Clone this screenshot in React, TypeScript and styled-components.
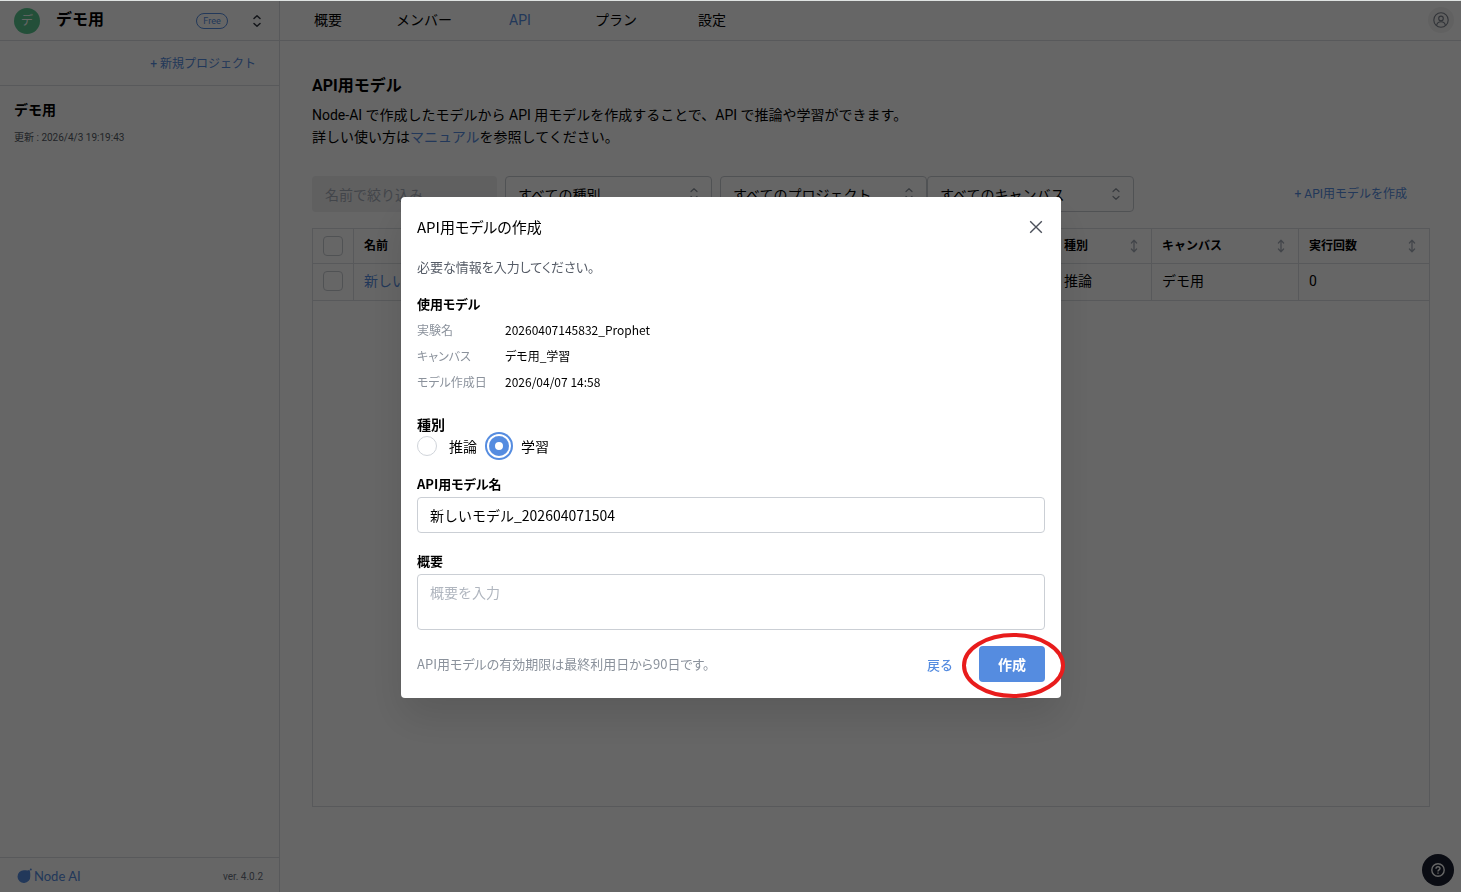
import React, { useState } from 'react';
import styled, { createGlobalStyle } from 'styled-components';

const blue = '#558ce0';
const line = '#dcdfe3';
const pageFont = "Roboto, 'Noto Sans CJK JP', sans-serif";
const dialogFont = "'Noto Sans CJK JP', 'Noto Sans', sans-serif";

const GlobalStyle = createGlobalStyle`
  *, *::before, *::after { box-sizing: border-box; }
  body { margin: 0; font-family: ${pageFont}; font-size: 14px; color: #000; background: #fff; }
  button, input, select, textarea { font: inherit; color: inherit; margin: 0; }
  button { border: 0; padding: 0; background: none; cursor: pointer; }
  a { color: ${blue}; text-decoration: none; }
  h1, h2, h3, p, dl, dd, dt, fieldset, legend { margin: 0; padding: 0; }
`;

/* ---------- Shell ---------- */
const Shell = styled.div`
  display: grid;
  grid-template-columns: 280px 1fr;
  min-height: 100vh;
`;

const Sidebar = styled.aside`
  display: flex;
  flex-direction: column;
  border-right: 1px solid ${line};
`;

const TeamBar = styled.div`
  display: flex;
  align-items: center;
  height: 41px;
  padding: 2px 14px 0;
  border-bottom: 1px solid ${line};
`;

const TeamAvatar = styled.span`
  display: grid;
  place-items: center;
  width: 26px;
  height: 26px;
  border-radius: 50%;
  background: #58c590;
  color: #fff;
  font-size: 12px;
  line-height: 24px;
`;

const TeamName = styled.strong`
  flex: 1;
  margin-left: 16px;
  font-size: 16px;
  line-height: 24px;
  padding-bottom: 2px;
`;

const PlanBadge = styled.span`
  width: 32px;
  height: 16px;
  border: 1px solid ${blue};
  border-radius: 8px;
  color: ${blue};
  font-size: 9px;
  line-height: 14px;
  text-align: center;
`;

const TeamSwitch = styled.button`
  display: grid;
  place-items: center;
  width: 16px;
  height: 24px;
  margin-left: 21px;
`;

const NewProject = styled.div`
  display: flex;
  align-items: center;
  justify-content: flex-end;
  height: 45px;
  padding: 2px 23px 0;
  border-bottom: 1px solid ${line};
`;

const TextButton = styled.button`
  color: ${blue};
  font-size: 12px;
  line-height: 20px;
`;

const Project = styled.div`
  flex: 1;
  padding: 14px;
`;

const ProjectName = styled.h2`
  font-size: 14px;
  line-height: 20px;
`;

const ProjectDate = styled.p`
  margin-top: 10px;
  color: #555b66;
  font-size: 10px;
  line-height: 16px;
`;

const SideFooter = styled.footer`
  display: flex;
  align-items: center;
  justify-content: space-between;
  height: 35px;
  padding: 2px 16px 0;
  border-top: 1px solid ${line};
  color: #6b7280;
  font-size: 10px;
`;

const Brand = styled.span`
  display: flex;
  align-items: center;
  gap: 2px;
  color: ${blue};
  font-family: Lato, sans-serif;
  font-size: 13px;
  line-height: 16px;
`;

const Column = styled.div`
  display: flex;
  flex-direction: column;
  min-width: 0;
`;

const TopBar = styled.header`
  display: flex;
  align-items: center;
  justify-content: space-between;
  height: 41px;
  padding-right: 7px;
  border-bottom: 1px solid ${line};
`;

const Tabs = styled.nav`
  display: flex;
`;

const Tab = styled.a<{ $active?: boolean }>`
  width: 96px;
  text-align: center;
  line-height: 24px;
  color: ${(p) => (p.$active ? blue : '#000')};
`;

const AccountButton = styled.button`
  display: grid;
  place-items: center;
  width: 26px;
  height: 26px;
  border-radius: 50%;
  background: #f2f2f2;
`;

const Main = styled.main`
  flex: 1;
  display: flex;
  flex-direction: column;
  padding: 33px 31px 85px 32px;
`;

const PageTitle = styled.h1`
  font-size: 16px;
  line-height: 24px;
`;

const Lead = styled.p`
  margin-top: 6px;
  line-height: 22px;
`;

const Filters = styled.div`
  display: flex;
  align-items: center;
  margin: 28px 0 16px;
`;

const FilterInput = styled.input`
  width: 185px;
  height: 36px;
  padding: 2px 13px 0;
  border: 0;
  border-radius: 4px;
  background: #f0f0f1;
  &::placeholder { color: #a6adb8; opacity: 1; }
`;

const SelectWrap = styled.span<{ $gap?: boolean }>`
  display: grid;
  grid-template-columns: 1fr;
  align-items: center;
  width: 207px;
  margin-left: ${(p) => (p.$gap ? '8px' : '0')};
  > * { grid-area: 1 / 1; }
  > svg { justify-self: end; margin-right: 13px; pointer-events: none; }
`;

const Select = styled.select`
  appearance: none;
  width: 100%;
  height: 36px;
  padding: 2px 32px 0 12px;
  border: 1px solid #c9cdd3;
  border-radius: 4px;
  background: #fff;
`;

const CreateLink = styled(TextButton)`
  margin: 0 23px 0 auto;
`;

const TableFrame = styled.div`
  flex: 1;
  border: 1px solid ${line};
`;

const Table = styled.table`
  width: 100%;
  table-layout: fixed;
  border-collapse: separate;
  border-spacing: 0;
  text-align: left;
  line-height: 20px;
  th, td {
    padding: 0 10px;
    border-bottom: 1px solid ${line};
    border-right: 1px solid ${line};
  }
  th:last-child, td:last-child { border-right: 0; }
  th { height: 35px; font-size: 12px; }
  td { height: 37px; padding-bottom: 2px; }
`;

const HeadCell = styled.span`
  display: flex;
  align-items: center;
  justify-content: space-between;
  padding-right: 2px;
`;

const Tick = styled.input`
  display: block;
  appearance: none;
  width: 20px;
  height: 20px;
  border: 1px solid #c9cdd3;
  border-radius: 4px;
`;

const HelpButton = styled.button`
  position: fixed;
  right: 7px;
  bottom: 6px;
  display: grid;
  place-items: center;
  width: 32px;
  height: 32px;
  border-radius: 50%;
  background: #1b1f30;
`;

/* ---------- Dialog ---------- */
const Backdrop = styled.div`
  position: fixed;
  inset: 0;
  display: grid;
  place-items: center;
  padding: 2px 0 0 1px;
  border-top: 1px solid #dfe3e2;
  background: rgba(0, 0, 0, 0.6);
`;

const Dialog = styled.section`
  width: 660px;
  max-width: 100%;
  padding: 16px;
  border-radius: 4px;
  background: #fff;
  font-family: ${dialogFont};
  box-shadow: 0 20px 40px rgba(0, 0, 0, 0.12);
`;

const DialogHead = styled.header`
  display: flex;
  align-items: center;
  justify-content: space-between;
  height: 28px;
`;

const DialogTitle = styled.h2`
  font-size: 15px;
  font-weight: 400;
  line-height: 28px;
  font-feature-settings: 'palt';
`;

const CloseButton = styled.button`
  display: grid;
  place-items: center;
  width: 18px;
  height: 28px;
`;

const Hint = styled.p`
  color: #555b66;
  font-size: 13px;
  line-height: 20px;
  font-feature-settings: 'palt';
`;

const DialogLead = styled(Hint)`
  margin: 16px 0 17px;
`;

const SectionTitle = styled.h3`
  font-size: 13px;
  line-height: 20px;
  font-feature-settings: 'palt';
`;

const Details = styled.dl`
  display: grid;
  grid-template-columns: 88px 1fr;
  row-gap: 6px;
  margin: 6px 0 22px;
  font-size: 12px;
  line-height: 20px;
  font-feature-settings: 'palt';
  dt { color: #8b929c; }
`;

const KindSet = styled.fieldset`
  border: 0;
  min-width: 0;
`;

const KindLegend = styled.legend`
  font-size: 14px;
  font-weight: 700;
  line-height: 20px;
`;

const KindRow = styled.div`
  display: flex;
  gap: 12px;
  margin-top: 2px;
`;

const KindLabel = styled.label`
  display: flex;
  align-items: center;
  gap: 12px;
  line-height: 20px;
`;

const Radio = styled.input`
  appearance: none;
  width: 20px;
  height: 20px;
  border: 1px solid #d0d4da;
  border-radius: 50%;
  &:checked {
    border: 6px solid ${blue};
    box-shadow: 0 0 0 2px #fff, 0 0 0 4px ${blue};
  }
`;

const Field = styled.div`
  display: flex;
  flex-direction: column;
  gap: 3px;
  margin-top: 18px;
`;

const FieldLabel = styled.label`
  font-size: 13px;
  font-weight: 700;
  line-height: 20px;
  font-feature-settings: 'palt';
`;

const TextInput = styled.input`
  height: 36px;
  padding: 0 12px;
  border: 1px solid #cbcfd5;
  border-radius: 4px;
`;

const TextArea = styled.textarea`
  height: 56px;
  padding: 7px 12px;
  border: 1px solid #cbcfd5;
  border-radius: 4px;
  line-height: 20px;
  resize: none;
  &::placeholder { color: #b0b6bf; opacity: 1; }
`;

const DialogFooter = styled.footer`
  display: flex;
  align-items: center;
  margin-top: 16px;
`;

const Expiry = styled(Hint)`
  flex: 1;
  color: #8b929c;
`;

const BackButton = styled.button`
  margin-right: 26px;
  color: ${blue};
  font-size: 13px;
  font-weight: 500;
`;

const SubmitArea = styled.div`
  position: relative;
`;

const SubmitButton = styled.button`
  width: 66px;
  height: 36px;
  border-radius: 4px;
  background: ${blue};
  color: #fff;
  font-weight: 700;
`;

const Ring = styled.svg`
  position: absolute;
  left: -17px;
  top: -13px;
  pointer-events: none;
`;

/* ---------- Icons ---------- */
const UpDown = ({ color = '#8b929c', w = 2 }: { color?: string; w?: number }) => (
  <svg width="10" height="14" viewBox="0 0 10 14" fill="none" stroke={color} strokeWidth={w} strokeLinecap="round" strokeLinejoin="round">
    <path d="M2 4.5 5 1.7l3 2.8M2 9.5l3 2.8 3-2.8" />
  </svg>
);

const SortIcon = () => (
  <svg width="10" height="14" viewBox="0 0 10 14" fill="none" stroke="#a6adb8" strokeWidth="1.3" strokeLinecap="round" strokeLinejoin="round">
    <path d="M5 1.5v11M2.4 4 5 1.3 7.6 4M2.4 10 5 12.7 7.6 10" />
  </svg>
);

const CloseIcon = () => (
  <svg width="14" height="14" viewBox="0 0 14 14" stroke="#4b505a" strokeWidth="1.4">
    <path d="M1.2 1.2 12.8 12.8M12.8 1.2 1.2 12.8" />
  </svg>
);

const AccountIcon = () => (
  <svg width="16" height="16" viewBox="0 0 16 16" fill="none" stroke="#7b818c" strokeWidth="1.1">
    <circle cx="8" cy="8" r="7.2" />
    <circle cx="8" cy="6.4" r="2.3" />
    <path d="M3.6 13.4c.5-2.4 2.2-3.6 4.4-3.6s3.9 1.2 4.4 3.6" />
  </svg>
);

const HelpIcon = () => (
  <svg width="14" height="14" viewBox="0 0 14 14" fill="none" stroke="#fff" strokeWidth="1.4">
    <circle cx="7" cy="7" r="6.2" />
    <path d="M5 5.7C5 4.4 5.9 3.7 7 3.7s2 .7 2 1.8c0 1.3-2 1.4-2 2.9" />
    <path d="M7 9.4v1.4" />
  </svg>
);

const LogoMark = () => (
  <svg width="16" height="16" viewBox="0 0 16 16" fill={blue}>
    <path d="M8 2.2c2.2 0 3.4.5 5.4-.1.9 1.6.9 3.4.9 6A6.4 6.4 0 1 1 8 2.2z" />
    <circle cx="14.8" cy="1.5" r="1" />
  </svg>
);

const filters = ['すべての種別', 'すべてのプロジェクト', 'すべてのキャンバス'];
const tabs = ['概要', 'メンバー', 'API', 'プラン', '設定'];

export default function App() {
  const [kind, setKind] = useState('学習');
  return (
    <>
      <GlobalStyle />
      <Shell>
        <Sidebar>
          <TeamBar>
            <TeamAvatar>デ</TeamAvatar>
            <TeamName>デモ用</TeamName>
            <PlanBadge>Free</PlanBadge>
            <TeamSwitch aria-label="チーム切り替え"><UpDown color="#333842" w={1.5} /></TeamSwitch>
          </TeamBar>
          <NewProject><TextButton>+ 新規プロジェクト</TextButton></NewProject>
          <Project>
            <ProjectName>デモ用</ProjectName>
            <ProjectDate>更新 : 2026/4/3 19:19:43</ProjectDate>
          </Project>
          <SideFooter>
            <Brand><LogoMark />Node AI</Brand>
            <span>ver. 4.0.2</span>
          </SideFooter>
        </Sidebar>
        <Column>
          <TopBar>
            <Tabs>
              {tabs.map((t) => <Tab key={t} href="#" $active={t === 'API'}>{t}</Tab>)}
            </Tabs>
            <AccountButton aria-label="アカウント"><AccountIcon /></AccountButton>
          </TopBar>
          <Main>
            <PageTitle>API用モデル</PageTitle>
            <Lead>
              Node-AI で作成したモデルから API 用モデルを作成することで、API で推論や学習ができます。<br />
              詳しい使い方は<a href="#">マニュアル</a>を参照してください。
            </Lead>
            <Filters>
              <FilterInput aria-label="名前" placeholder="名前で絞り込み" />
              {filters.map((f, i) => (
                <SelectWrap key={f} $gap={i < 2}>
                  <Select aria-label={f}><option>{f}</option></Select>
                  <UpDown w={1.2} />
                </SelectWrap>
              ))}
              <CreateLink>+ API用モデルを作成</CreateLink>
            </Filters>
            <TableFrame>
              <Table>
                <colgroup>
                  <col width="41" /><col /><col width="98" /><col width="147" /><col width="130" />
                </colgroup>
                <thead>
                  <tr>
                    <th><Tick type="checkbox" aria-label="すべて選択" /></th>
                    {['名前', '種別', 'キャンバス', '実行回数'].map((h) => (
                      <th key={h}><HeadCell>{h}<SortIcon /></HeadCell></th>
                    ))}
                  </tr>
                </thead>
                <tbody>
                  <tr>
                    <td><Tick type="checkbox" aria-label="行を選択" /></td>
                    <td><a href="#">新しいモデル</a></td>
                    <td>推論</td>
                    <td>デモ用</td>
                    <td>0</td>
                  </tr>
                </tbody>
              </Table>
            </TableFrame>
          </Main>
        </Column>
      </Shell>
      <HelpButton aria-label="ヘルプ"><HelpIcon /></HelpButton>

      <Backdrop>
        <Dialog role="dialog" aria-modal="true" aria-labelledby="dialog-title">
          <DialogHead>
            <DialogTitle id="dialog-title">API用モデルの作成</DialogTitle>
            <CloseButton aria-label="閉じる"><CloseIcon /></CloseButton>
          </DialogHead>
          <DialogLead>必要な情報を入力してください。</DialogLead>
          <SectionTitle>使用モデル</SectionTitle>
          <Details>
            <dt>実験名</dt><dd>20260407145832_Prophet</dd>
            <dt>キャンバス</dt><dd>デモ用_学習</dd>
            <dt>モデル作成日</dt><dd>2026/04/07 14:58</dd>
          </Details>
          <KindSet>
            <KindLegend>種別</KindLegend>
            <KindRow>
              {['推論', '学習'].map((k) => (
                <KindLabel key={k}>
                  <Radio type="radio" name="kind" checked={kind === k} onChange={() => setKind(k)} />
                  {k}
                </KindLabel>
              ))}
            </KindRow>
          </KindSet>
          <Field>
            <FieldLabel htmlFor="model-name">API用モデル名</FieldLabel>
            <TextInput id="model-name" defaultValue="新しいモデル_202604071504" />
          </Field>
          <Field>
            <FieldLabel htmlFor="summary">概要</FieldLabel>
            <TextArea id="summary" placeholder="概要を入力" />
          </Field>
          <DialogFooter>
            <Expiry>API用モデルの有効期限は最終利用日から90日です。</Expiry>
            <BackButton>戻る</BackButton>
            <SubmitArea>
              <SubmitButton>作成</SubmitButton>
              <Ring width="104" height="66" viewBox="0 0 104 66" fill="none" stroke="#e81c1c" strokeWidth="4">
                <ellipse cx="51.5" cy="32.5" rx="49.5" ry="30.5" />
              </Ring>
            </SubmitArea>
          </DialogFooter>
        </Dialog>
      </Backdrop>
    </>
  );
}
